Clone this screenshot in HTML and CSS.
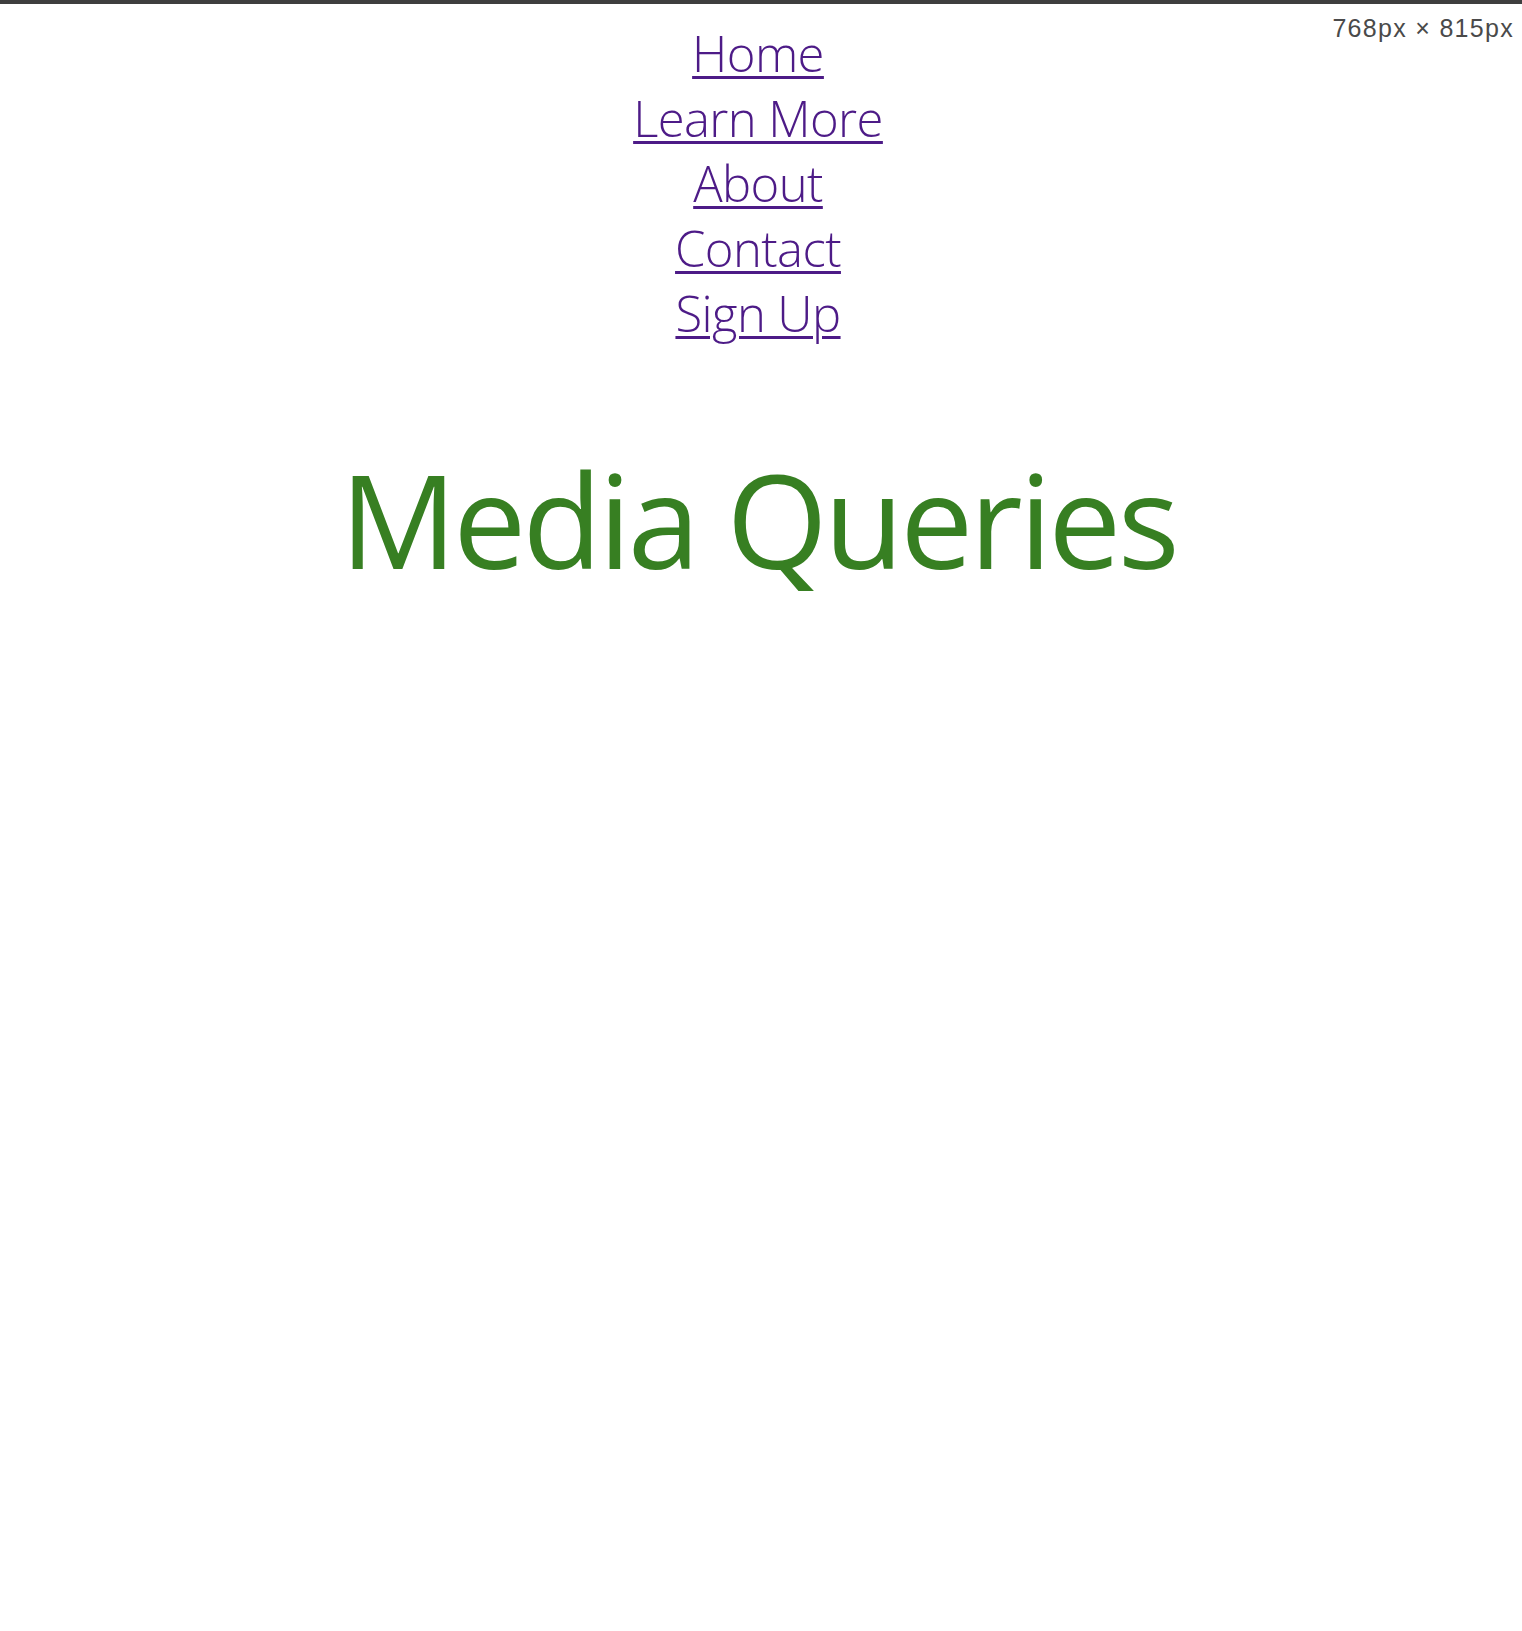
FILE: index.html
```html
<!DOCTYPE html>
<html>
<head>
<meta charset="utf-8">
<link rel="stylesheet" href="styles.css">
</head>
<body>
<div class="topbar"></div>
<div class="size-label">768px × 815px</div>
<main class="page">
  <nav class="nav">
    <a href="#" class="nav-link">Home</a>
    <a href="#" class="nav-link">Learn More</a>
    <a href="#" class="nav-link">About</a>
    <a href="#" class="nav-link">Contact</a>
    <a href="#" class="nav-link">Sign Up</a>
  </nav>
  <h1 class="title">Media Queries</h1>
</main>
</body>
</html>
```
FILE: styles.css
```css
html, body {
  margin: 0;
  padding: 0;
  background: #ffffff;
}
body {
  font-family: "Open Sans", sans-serif;
}
.topbar {
  height: 4px;
  background: #3e3e3e;
}
.size-label {
  position: absolute;
  top: 14px;
  right: 8px;
  font-family: "Liberation Sans", Arial, sans-serif;
  font-size: 25px;
  letter-spacing: 1.3px;
  color: #4a4a4a;
}
.page {
  width: 1516px;
}
.nav {
  display: flex;
  flex-direction: column;
  align-items: center;
  padding-top: 17px;
}
.nav-link {
  font-size: 49px;
  font-weight: 300;
  letter-spacing: -0.6px;
  line-height: 65px;
  color: #4d1b87;
  text-decoration: underline;
  text-decoration-thickness: 3px;
  text-underline-offset: 4px;
}
.title {
  margin: 84px 0 0;
  text-align: center;
  font-size: 130px;
  font-weight: 400;
  letter-spacing: -3.6px;
  line-height: normal;
  color: #377f22;
}
```
